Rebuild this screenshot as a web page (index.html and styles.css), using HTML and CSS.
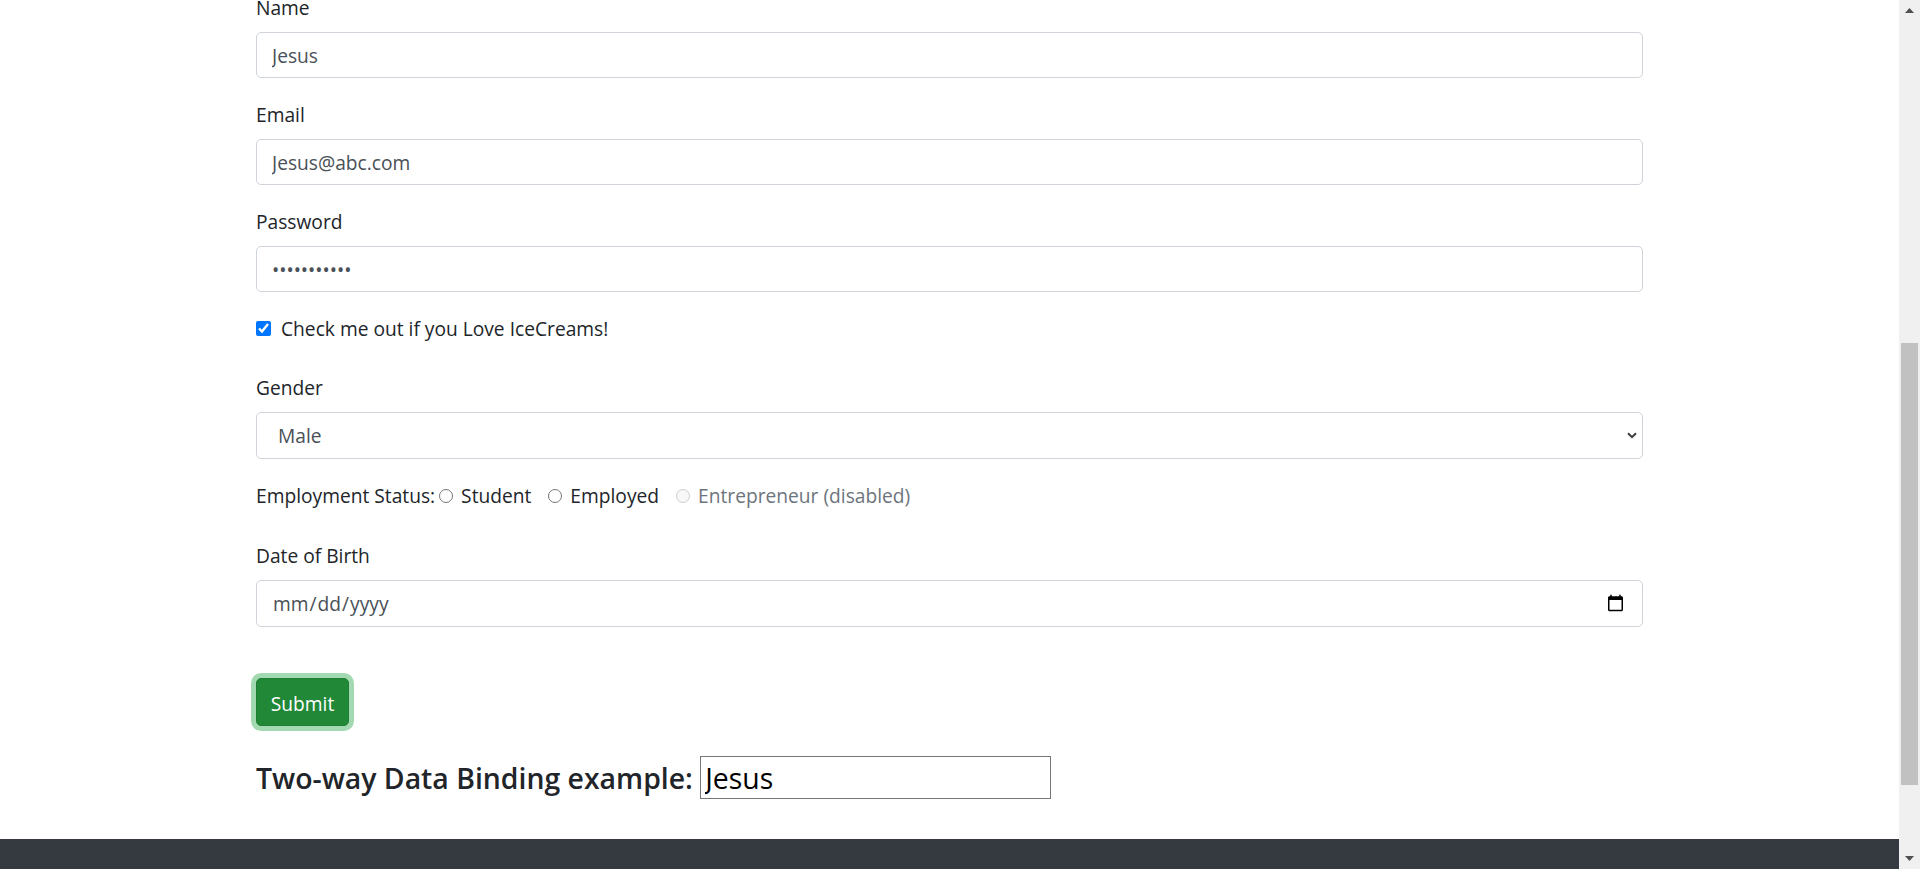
FILE: index.html
```html
<!DOCTYPE html>
<html lang="en">
<head>
<meta charset="utf-8">
<title>Form</title>
<link rel="stylesheet" href="styles.css">
</head>
<body>
<div class="page">
  <main class="content">
    <form class="form">
      <div class="group first">
        <label class="label" for="name">Name</label>
        <input class="control" id="name" type="text" value="Jesus">
      </div>
      <div class="group">
        <label class="label" for="email">Email</label>
        <input class="control" id="email" type="email" value="Jesus@abc.com">
      </div>
      <div class="group">
        <label class="label" for="password">Password</label>
        <input class="control" id="password" type="password" value="jesus123456">
      </div>
      <div class="check"><input class="checkbox" type="checkbox" id="love" checked><label for="love">Check me out if you Love IceCreams!</label></div>
      <div class="group gender">
        <label class="label" for="gender">Gender</label>
        <div class="select-wrap">
          <select class="control select" id="gender">
            <option>Male</option>
            <option>Female</option>
          </select>
          <svg class="chevron" width="10" height="7" viewBox="0 0 10 7" aria-hidden="true"><polyline points="1,1.2 5,5.2 9,1.2" fill="none" stroke="#3c3c3c" stroke-width="2"/></svg>
        </div>
      </div>
      <div class="employment"><span class="emp-title">Employment Status:</span><span class="radio-item"><input class="radio" type="radio" name="emp" id="student"><label for="student">Student</label></span><span class="radio-item"><input class="radio" type="radio" name="emp" id="employed"><label for="employed">Employed</label></span><span class="radio-item disabled"><input class="radio" type="radio" name="emp" id="entre" disabled><label for="entre">Entrepreneur (disabled)</label></span></div>
      <div class="group dob">
        <label class="label" for="dob">Date of Birth</label>
        <input class="control date" type="date" id="dob">
      </div>
      <button class="btn-submit" type="button">Submit</button>
    </form>
    <h4 class="binding">Two-way Data Binding example: <input class="binding-input" type="text" value="Jesus"></h4>
  </main>
  <footer class="footer"></footer>
</div>
<div class="scrollbar" aria-hidden="true">
  <div class="sb-btn"><svg width="9" height="5" viewBox="0 0 9 5"><polygon points="0,5 4.5,0 9,5" fill="#505050"/></svg></div>
  <div class="sb-track"><div class="sb-thumb"></div></div>
  <div class="sb-btn"><svg width="9" height="5" viewBox="0 0 9 5"><polygon points="0,0 9,0 4.5,5" fill="#505050"/></svg></div>
</div>
</body>
</html>
```
FILE: styles.css
```css
* { box-sizing: border-box; }
html, body { margin: 0; padding: 0; }
body {
  display: flex;
  height: 869px;
  overflow: hidden;
  background: #fff;
  color: #212529;
  font-family: "Open Sans", "Noto Sans", sans-serif;
  font-size: 19.2px;
}
.page {
  flex: 1;
  min-width: 0;
  display: flex;
  flex-direction: column;
}
.content {
  flex: 1;
  width: 1387px;
  margin: 0 auto;
}
.group { margin-top: 22px; }
.group.first { margin-top: -7px; }
.label {
  display: block;
  line-height: 29px;
  margin-bottom: 10px;
}
.control {
  display: block;
  width: 100%;
  height: 46px;
  padding: 0 15px;
  font-family: inherit;
  font-size: 19.2px;
  color: #495057;
  background: #fff;
  border: 1px solid #ced4da;
  border-radius: 5px;
  outline: none;
}
.check {
  margin-top: 22px;
  line-height: 29px;
}
.checkbox {
  width: 15px;
  height: 15px;
  margin: 0 10px 2px 0;
  vertical-align: baseline;
}
.gender { margin-top: 30px; }
.select-wrap { position: relative; }
.select {
  height: 47px;
  padding-left: 21px;
  appearance: none;
  -webkit-appearance: none;
}
.chevron {
  position: absolute;
  right: 6px;
  top: 20px;
  pointer-events: none;
}
.employment {
  margin-top: 22px;
  line-height: 29px;
  white-space: nowrap;
}
.emp-title { margin-right: 4px; }
.radio-item { margin-right: 17px; }
.radio {
  width: 14px;
  height: 14px;
  margin: 0 8px 1px 0;
  vertical-align: baseline;
}
.radio-item.disabled { color: #6c757d; }
.dob { margin-top: 31px; }
.date { height: 47px; }
.btn-submit {
  display: block;
  margin-top: 51px;
  width: 93px;
  height: 48px;
  padding: 2px 0 0;
  font-family: inherit;
  font-size: 19.2px;
  color: #fff;
  background: #218838;
  border: 1px solid #1e7e34;
  border-radius: 5px;
  box-shadow: 0 0 0 5px rgba(72, 180, 97, 0.5);
}
.binding {
  margin: 30px 0 0;
  font-size: 28.4px;
  font-weight: 600;
  line-height: 1.2;
}
.binding-input {
  width: 351px;
  height: 43px;
  padding: 1px 4px;
  font-family: inherit;
  font-size: 28.4px;
  font-weight: 400;
  color: #000;
  border: 1px solid #767676;
  border-radius: 0;
  vertical-align: baseline;
  outline: none;
}
.footer {
  flex: none;
  height: 30px;
  background: #343a40;
}
.scrollbar {
  flex: none;
  width: 21px;
  display: flex;
  flex-direction: column;
  background: #f0f0f0;
}
.sb-btn {
  height: 21px;
  display: flex;
  align-items: center;
  justify-content: center;
}
.sb-track {
  flex: 1;
  padding: 0 2px;
}
.sb-thumb {
  margin-top: 322px;
  height: 442px;
  background: #c1c1c1;
}
```
